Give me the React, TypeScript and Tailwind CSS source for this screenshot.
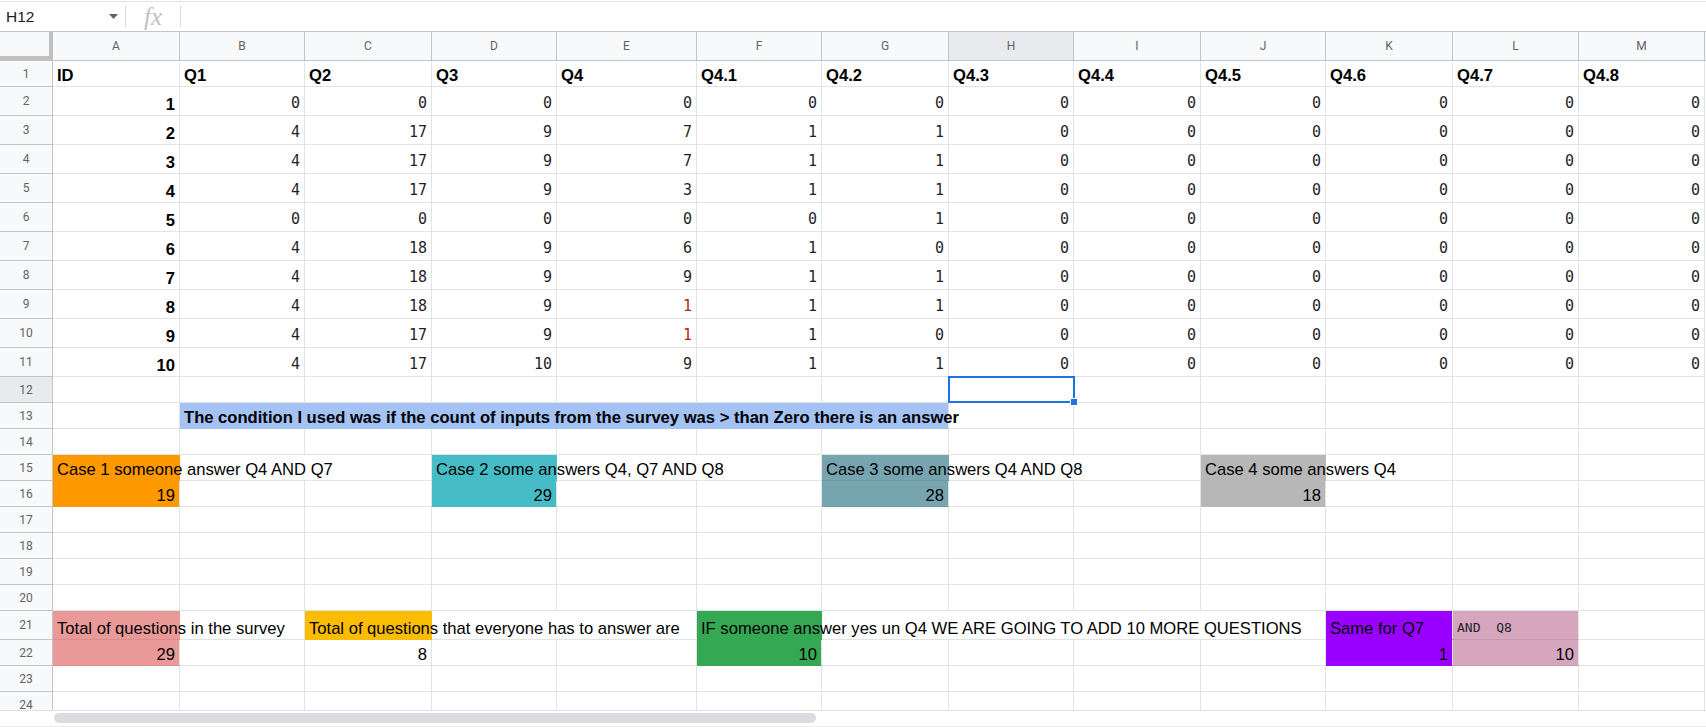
import clsx from "clsx";

type Cell = {
  t?: string;
  r?: boolean;
  b?: boolean;
  mono?: boolean;
  small?: boolean;
  bg?: string;
  noR?: boolean;
  c?: string;
  w?: string;
  span?: number;
  sel?: boolean;
};

type Row = { n: number; h: string; cells: Cell[]; active?: boolean };

const LETTERS = ["A", "B", "C", "D", "E", "F", "G", "H", "I", "J", "K", "L", "M"];
const W = [
  "w-[127px]",
  "w-[125px]",
  "w-[127px]",
  "w-[125px]",
  "w-[140px]",
  "w-[125px]",
  "w-[127px]",
  "w-[125px]",
  "w-[127px]",
  "w-[125px]",
  "w-[127px]",
  "w-[126px]",
  "w-[126px]",
];

const HEAD = ["ID", "Q1", "Q2", "Q3", "Q4", "Q4.1", "Q4.2", "Q4.3", "Q4.4", "Q4.5", "Q4.6", "Q4.7", "Q4.8"];

const DATA = [
  [0, 0, 0, 0, 0, 0, 0, 0, 0, 0, 0, 0],
  [4, 17, 9, 7, 1, 1, 0, 0, 0, 0, 0, 0],
  [4, 17, 9, 7, 1, 1, 0, 0, 0, 0, 0, 0],
  [4, 17, 9, 3, 1, 1, 0, 0, 0, 0, 0, 0],
  [0, 0, 0, 0, 0, 1, 0, 0, 0, 0, 0, 0],
  [4, 18, 9, 6, 1, 0, 0, 0, 0, 0, 0, 0],
  [4, 18, 9, 9, 1, 1, 0, 0, 0, 0, 0, 0],
  [4, 18, 9, 1, 1, 1, 0, 0, 0, 0, 0, 0],
  [4, 17, 9, 1, 1, 0, 0, 0, 0, 0, 0, 0],
  [4, 17, 10, 9, 1, 1, 0, 0, 0, 0, 0, 0],
];

const ORANGE = "bg-[#ff9900] border-b-[#ff9900]";
const TEAL = "bg-[#46bdc6] border-b-[#46bdc6]";
const SLATE = "bg-[#76a5af] border-b-[#6b99a3]";
const GREY = "bg-[#b7b7b7] border-b-[#b7b7b7]";
const PINK = "bg-[#ea9999] border-b-[#d98c8c]";
const YELLOW = "bg-[#fbbc04] border-b-[#fbbc04]";
const GREEN = "bg-[#34a853] border-b-[#34a853]";
const PURPLE = "bg-[#9900ff] border-b-[#9900ff]";
const MAUVE = "bg-[#d5a6bd] border-b-[#c898b0]";

const empty = (k = 13): Cell[] => Array.from({ length: k }, () => ({}));

const rows: Row[] = [
  { n: 1, h: "h-[26px]", cells: HEAD.map((t) => ({ t, b: true })) },
  ...DATA.map((vals, i) => ({
    n: i + 2,
    h: "h-[29px]",
    cells: [
      { t: String(i + 1), r: true, b: true },
      ...vals.map((v, j) => ({
        t: String(v),
        r: true,
        mono: true,
        c: j === 3 && (i === 7 || i === 8) ? "text-[#b3261e]" : undefined,
      })),
    ],
  })),
  {
    n: 12,
    h: "h-[26px]",
    active: true,
    cells: empty().map((c, i) => (i === 7 ? { sel: true } : c)),
  },
  {
    n: 13,
    h: "h-[26px]",
    cells: [
      {},
      {
        t: "The condition I used was if the count of inputs from the survey was > than Zero there is an answer",
        b: true,
        bg: "bg-[#a4c2f4] border-b-[#a4c2f4]",
        w: "w-[769px]",
        span: 6,
      },
      ...empty(6),
    ],
  },
  { n: 14, h: "h-[26px]", cells: empty() },
  {
    n: 15,
    h: "h-[26px]",
    cells: [
      { t: "Case 1 someone answer Q4 AND Q7", bg: ORANGE, noR: true },
      { noR: true },
      {},
      { t: "Case 2 some answers Q4, Q7 AND Q8", bg: TEAL, noR: true },
      { noR: true },
      {},
      { t: "Case 3 some answers Q4 AND Q8", bg: SLATE, noR: true },
      { noR: true },
      {},
      { t: "Case 4 some answers Q4", bg: GREY, noR: true },
      {},
      {},
      {},
    ],
  },
  {
    n: 16,
    h: "h-[26px]",
    cells: [
      { t: "19", r: true, bg: ORANGE },
      {},
      {},
      { t: "29", r: true, bg: TEAL },
      {},
      {},
      { t: "28", r: true, bg: SLATE },
      {},
      {},
      { t: "18", r: true, bg: GREY },
      {},
      {},
      {},
    ],
  },
  { n: 17, h: "h-[26px]", cells: empty() },
  { n: 18, h: "h-[26px]", cells: empty() },
  { n: 19, h: "h-[26px]", cells: empty() },
  { n: 20, h: "h-[26px]", cells: empty() },
  {
    n: 21,
    h: "h-[29px]",
    cells: [
      { t: "Total of questions in the survey", bg: PINK, noR: true },
      {},
      { t: "Total of questions that everyone has to answer are", bg: YELLOW, noR: true },
      { noR: true },
      {},
      { t: "IF someone answer yes un Q4 WE ARE GOING TO ADD 10 MORE QUESTIONS", bg: GREEN, noR: true },
      { noR: true },
      { noR: true },
      { noR: true },
      {},
      { t: "Same for Q7", bg: PURPLE },
      { t: "AND  Q8", bg: MAUVE, mono: true, small: true },
      {},
    ],
  },
  {
    n: 22,
    h: "h-[26px]",
    cells: [
      { t: "29", r: true, bg: PINK },
      {},
      { t: "8", r: true },
      {},
      {},
      { t: "10", r: true, bg: GREEN },
      {},
      {},
      {},
      {},
      { t: "1", r: true, bg: PURPLE },
      { t: "10", r: true, bg: MAUVE },
      {},
    ],
  },
  { n: 23, h: "h-[26px]", cells: empty() },
  { n: 24, h: "h-[26px]", cells: empty() },
];

function GridCell({ cell, width }: { cell: Cell; width: string }) {
  return (
    <div
      className={clsx(
        "relative flex h-full shrink-0 items-end whitespace-pre border-b border-[#e2e3e3] px-[4px]",
        cell.mono ? "pb-[2px]" : "pb-[1px]",
        width,
        !cell.noR && "border-r",
        cell.bg,
        cell.r ? "justify-end" : "justify-start",
      )}
    >
      {cell.t && (
        <span
          className={clsx(
            "leading-[19px]",
            cell.mono
              ? "font-['DejaVu_Sans_Mono',monospace]"
              : "font-['Liberation_Sans',Arial,sans-serif]",
            cell.mono ? (cell.small ? "text-[13px]" : "text-[15px]") : "text-[16.6px]",
            cell.b && "font-bold",
            cell.c ?? (cell.mono ? "text-[#1f1f2a]" : "text-black"),
          )}
        >
          {cell.t}
        </span>
      )}
      {cell.sel && (
        <div className="absolute -top-px -left-px z-10 h-[27px] w-[127px] border-2 border-[#1a73e8]">
          <div className="absolute -right-[5px] -bottom-[5px] h-[8px] w-[8px] border border-white bg-[#1a73e8]" />
        </div>
      )}
    </div>
  );
}

function SheetRow({ row }: { row: Row }) {
  let col = 0;
  return (
    <div className={clsx("flex", row.h)}>
      <div
        className={clsx(
          "flex w-[53px] shrink-0 items-center justify-center border-r border-b border-[#c4c4c4] font-['Roboto',sans-serif] text-[12px] text-[#5f6368]",
          row.active ? "bg-[#e8eaed]" : "bg-[#f8f9fa]",
        )}
      >
        {row.n}
      </div>
      {row.cells.map((cell, i) => {
        const width = cell.w ?? W[col] ?? W[12];
        col += cell.span ?? 1;
        return <GridCell key={i} cell={cell} width={width} />;
      })}
    </div>
  );
}

export default function App() {
  return (
    <div className="h-[727px] w-[1706px] overflow-hidden bg-white font-['Liberation_Sans',Arial,sans-serif] text-black">
      {/* formula bar */}
      <div className="mt-px flex h-[31px] items-center border-y border-t-[#e6e6e6] border-b-[#c4c4c4]">
        <div className="flex w-[125px] items-center justify-between pl-[6px] pr-[7px]">
          <span className="text-[15.5px] text-[#202124]">H12</span>
          <svg width="9" height="5" viewBox="0 0 9 5">
            <path d="M0 0h9L4.5 5z" fill="#5f6368" />
          </svg>
        </div>
        <div className="h-[21px] w-px bg-[#dadce0]" />
        <div className="flex w-[54px] items-center justify-center">
          <span className="font-['Liberation_Serif',serif] text-[25px] italic leading-none text-[#bdc1c6]">fx</span>
        </div>
        <div className="h-[21px] w-px bg-[#dadce0]" />
      </div>

      {/* column headers */}
      <div className="flex h-[29px] border-b border-[#c4c4c4] bg-[#f8f9fa]">
        <div className="w-[53px] shrink-0 border-r-4 border-b-4 border-[#bfbfbf]" />
        {LETTERS.map((l, i) => (
          <div
            key={l}
            className={clsx(
              "flex shrink-0 items-center justify-center border-r border-[#c4c4c4] font-['Roboto',sans-serif] text-[12px] text-[#5f6368]",
              W[i],
              l === "H" && "bg-[#e8eaed]",
            )}
          >
            {l}
          </div>
        ))}
      </div>

      {/* sheet body */}
      <div className="h-[649px] overflow-hidden">
        {rows.map((row) => (
          <SheetRow key={row.n} row={row} />
        ))}
      </div>

      {/* horizontal scroll bar */}
      <div className="h-[17px] border-t border-b border-t-[#e0e0e0] border-b-[#ececec] bg-white pt-[2px]">
        <div className="ml-[54px] h-[10px] w-[762px] rounded-full bg-[#dadce0]" />
      </div>
    </div>
  );
}
